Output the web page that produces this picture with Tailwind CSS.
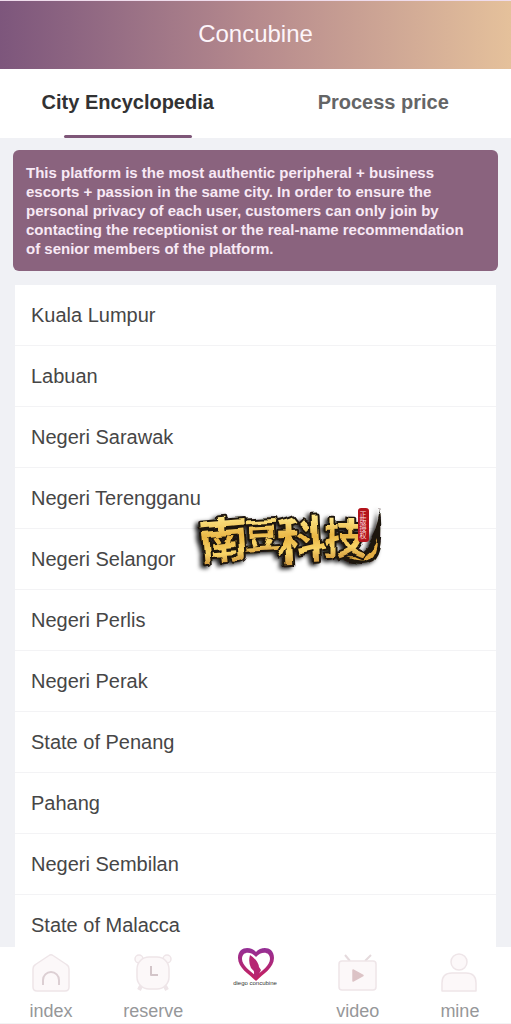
<!DOCTYPE html>
<html lang="en">
<head>
  <meta charset="UTF-8" />
  <meta name="viewport" content="width=device-width, initial-scale=1.0"/>
  <title>Concubine</title>
  <script src="https://cdn.jsdelivr.net/npm/@tailwindcss/browser@4"></script>
</head>
<body class="bg-[#f0f1f5] h-screen flex flex-col overflow-hidden font-['Liberation_Sans',Arial,sans-serif]">

  <!-- Header -->
  <header class="h-[69px] shrink-0 border-t border-[#efdcec] bg-linear-to-r from-[#7d567c] via-[#b68a8d] to-[#e5c19b] flex items-center justify-center pb-[2px]">
    <h1 class="text-2xl text-[#fdf5fa]">Concubine</h1>
  </header>

  <!-- Tabs -->
  <nav class="h-[69px] shrink-0 bg-white grid grid-cols-2 text-xl font-bold">
    <button class="relative pb-1 text-[#323233]">
      City Encyclopedia
      <span class="absolute bottom-0 inset-x-16 h-[3px] rounded-full bg-[#7e5678]"></span>
    </button>
    <button class="pb-1 text-[#646566]">Process price</button>
  </nav>

  <!-- Content -->
  <main class="relative grow min-h-0 overflow-hidden px-[13px] pt-3">
    <p class="bg-[#8a637e] rounded-md p-[13px] pr-6 text-[15px]/[19px] font-bold text-[#f8e9f5]">This platform is the most authentic peripheral + business escorts + passion in the same city. In order to ensure the personal privacy of each user, customers can only join by contacting the receptionist or the real-name recommendation of senior members of the platform.</p>

    <ul class="mt-[14px] mx-[2px] bg-white text-xl text-[#464646]">
      <li class="h-[61px] px-4 flex items-center border-b border-[#f3f3f5]">Kuala Lumpur</li>
      <li class="h-[61px] px-4 flex items-center border-b border-[#f3f3f5]">Labuan</li>
      <li class="h-[61px] px-4 flex items-center border-b border-[#f3f3f5]">Negeri Sarawak</li>
      <li class="h-[61px] px-4 flex items-center border-b border-[#f3f3f5]">Negeri Terengganu</li>
      <li class="h-[61px] px-4 flex items-center border-b border-[#f3f3f5]">Negeri Selangor</li>
      <li class="h-[61px] px-4 flex items-center border-b border-[#f3f3f5]">Negeri Perlis</li>
      <li class="h-[61px] px-4 flex items-center border-b border-[#f3f3f5]">Negeri Perak</li>
      <li class="h-[61px] px-4 flex items-center border-b border-[#f3f3f5]">State of Penang</li>
      <li class="h-[61px] px-4 flex items-center border-b border-[#f3f3f5]">Pahang</li>
      <li class="h-[61px] px-4 flex items-center border-b border-[#f3f3f5]">Negeri Sembilan</li>
      <li class="h-[61px] px-4 flex items-center border-b border-[#f3f3f5]">State of Malacca</li>
    </ul>

    <!-- Watermark -->
    <svg class="absolute top-[350px] left-[190px] w-[210px] h-[95px]" viewBox="0 -12 210 95">
      <defs>
        <linearGradient id="gold" x1="0" y1="0" x2="0" y2="1">
          <stop offset="0.2" stop-color="#ffe98a"/>
          <stop offset="0.5" stop-color="#e9b544"/>
          <stop offset="0.7" stop-color="#f9d568"/>
          <stop offset="1" stop-color="#b87322"/>
        </linearGradient>
        <filter id="brush" x="-10%" y="-10%" width="120%" height="130%">
          <feTurbulence type="fractalNoise" baseFrequency="0.05" numOctaves="1" seed="4" result="noise"/>
          <feDisplacementMap in="SourceGraphic" in2="noise" scale="9" xChannelSelector="R" yChannelSelector="G"/>
          <feDropShadow dx="-3" dy="2" stdDeviation="2" flood-color="#000" flood-opacity="0.9"/>
        </filter>
      </defs>
      <g filter="url(#brush)">
        <path d="M150 58Q184 58 191 8Q196 52 183 61Q170 68 150 58Z" fill="#1c130a"/>
        <path d="M156 57Q180 60 188 38Q188 54 180 59Q170 63 156 57Z" fill="#e3ad42"/>
        <g fill="url(#gold)" stroke="#1c130a" stroke-width="4" paint-order="stroke" stroke-linejoin="round" font-family="'Noto Sans CJK SC', sans-serif" font-weight="700">
          <text x="8" y="59" font-size="50" transform="rotate(-5 34 40)">南</text>
          <text x="54" y="48" font-size="35" transform="rotate(-3 70 34)">豆</text>
          <text x="86" y="59" font-size="50" transform="rotate(-3 112 40)">科</text>
          <text x="133" y="54" font-size="42">技</text>
        </g>
      </g>
      <rect x="168" y="8" width="11" height="34" rx="3" fill="#b3131b"/>
      <text x="173" y="11" font-size="7" fill="#fbdede" font-family="'Noto Sans CJK SC', sans-serif" class="[writing-mode:vertical-rl]">正版授权</text>
    </svg>
  </main>

  <!-- Bottom navigation -->
  <footer class="h-[77px] shrink-0 bg-white grid grid-cols-5 text-lg/5 text-[#969799] border-b border-[#f3f3f4]">
    <a href="#index" class="flex flex-col items-center gap-[5px] pt-[5px]">
      <svg class="w-11 h-11" viewBox="0 0 44 44" fill="#fcf8f9" stroke="#eee5e8" stroke-width="1.5" stroke-linejoin="round">
        <path d="M20 3.5Q22 2 24 3.5L37.5 12.5Q40 14 40 17V35Q40 39 36 39H8Q4 39 4 35V17Q4 14 6.5 12.5Z"/>
        <path d="M14 33V28a8 8 0 0 1 16 0V33" fill="none" stroke="#dccfd3" stroke-width="2"/>
      </svg>
      index
    </a>
    <a href="#reserve" class="flex flex-col items-center gap-[5px] pt-[5px]">
      <svg class="w-11 h-11" viewBox="0 0 44 44" fill="#fcf8f9" stroke="#eee5e8" stroke-width="1.5" stroke-linejoin="round">
        <circle cx="8" cy="7" r="4"/>
        <circle cx="36" cy="7" r="4"/>
        <path d="M10 34L8 38M34 34L36 38" stroke-width="4"/>
        <rect x="6" y="5" width="32" height="32" rx="12"/>
        <path d="M20 14V23H27" fill="none" stroke="#d3c5c9" stroke-width="2"/>
      </svg>
      reserve
    </a>
    <a href="#home" aria-label="home" class="flex flex-col items-center">
      <svg class="w-[60px] h-12" viewBox="0 0 60 48">
        <defs>
          <linearGradient id="heart" x1="0" y1="0" x2="0" y2="1">
            <stop offset="0" stop-color="#943096"/>
            <stop offset="1" stop-color="#c91f5c"/>
          </linearGradient>
        </defs>
        <path fill="url(#heart)" fill-rule="evenodd" d="M31 34C24 27 13 21 13 11C13 -1 26 -1 31 5C36 -1 49 -1 49 11C49 21 38 27 31 34ZM31 29C37 24 45 18 45 12C45 4 36 4 31 10C26 4 17 4 17 12C17 18 25 24 31 29Z"/>
        <path fill="#b62672" d="M25 8Q33 13 34 20L36 23L34 27Q32 28 32 33L28 29Q31 25 26 21Q23 15 25 8Z"/>
        <text x="30" y="38" font-size="6" text-anchor="middle" fill="#333">diego concubine</text>
      </svg>
    </a>
    <a href="#video" class="flex flex-col items-center gap-[5px] pt-[5px]">
      <svg class="w-11 h-11" viewBox="0 0 44 44" fill="#fcf8f9" stroke="#eee5e8" stroke-width="1.5" stroke-linejoin="round">
        <path d="M9 3L14 9M35 3L29 9" stroke="#e5dadd" stroke-width="2"/>
        <rect x="3" y="9" width="37" height="29" rx="3"/>
        <path d="M17 18V29L27 23.5Z" fill="#dcc3c6" stroke="#dcc3c6"/>
      </svg>
      video
    </a>
    <a href="#mine" class="flex flex-col items-center gap-[5px] pt-[5px]">
      <svg class="w-11 h-11" viewBox="0 0 44 44" fill="#fcf8f9" stroke="#eee5e8" stroke-width="1.5" stroke-linejoin="round">
        <circle cx="21" cy="10" r="8"/>
        <path d="M4 39V31Q4 21 14 21H28Q38 21 38 31V39Z"/>
      </svg>
      mine
    </a>
  </footer>

</body>
</html>
